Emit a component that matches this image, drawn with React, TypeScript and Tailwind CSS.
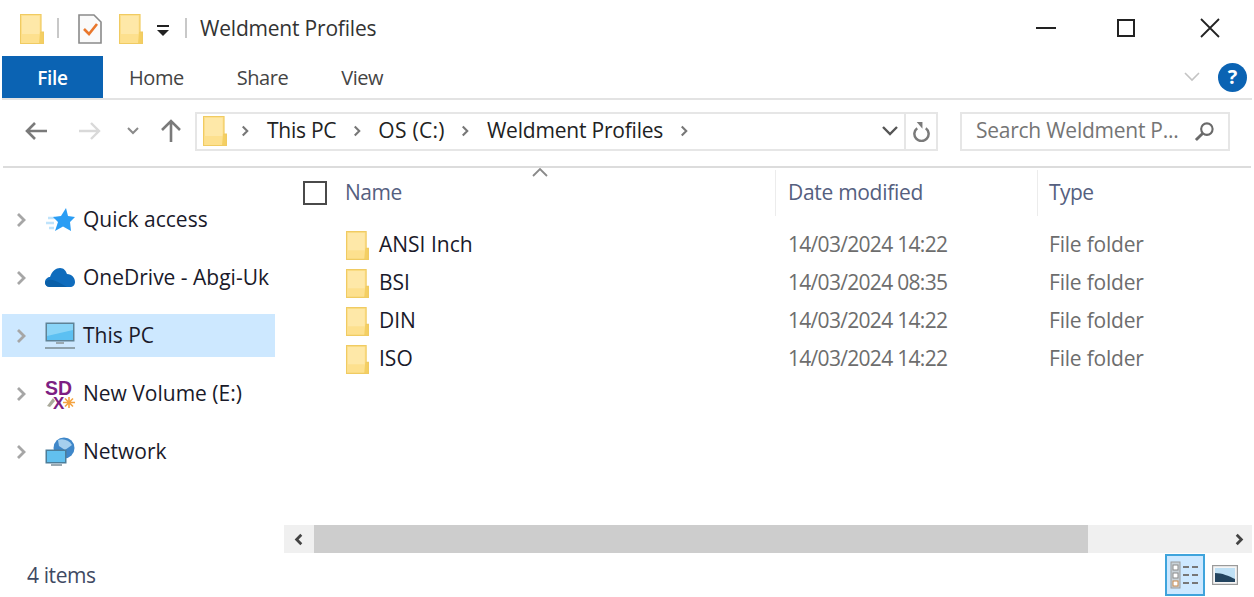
import React from "react";

const font = { fontFamily: '"Open Sans","Noto Sans",sans-serif' };

function Folder({ className = "" }: { className?: string }) {
  return (
    <svg viewBox="0 0 24 30" className={className}>
      <path d="M0.5 0.5H21V18H23.5V29.5H0.5Z" fill="#fde08e" />
      <path d="M2 2H19.5V20H2Z" fill="#fee8a8" />
      <path d="M20 18H23.5V29.5H19Z" fill="#f4cf63" />
      <path d="M0.5 0.5H21V18H23.5V29.5H0.5Z" fill="none" stroke="#f0cb62" strokeWidth="1.2" />
    </svg>
  );
}

function Chevron({ className = "" }: { className?: string }) {
  return (
    <svg viewBox="0 0 10 16" className={className}>
      <path d="M2 2L8 8L2 14" fill="none" stroke="currentColor" strokeWidth="2.8" />
    </svg>
  );
}

function Star() {
  return (
    <svg viewBox="0 0 30 26" className="w-[30px] h-[26px]">
      <path d="M3 11H10M1 16H9M4 21H9" stroke="#bfe3fb" strokeWidth="2.4" />
      <path d="M21 1L23 9L30 10L25 15L26 24L18 19.5L10 24L13 15L8 10L16 9Z" fill="#2a9df4" />
    </svg>
  );
}

function Cloud() {
  return (
    <svg viewBox="0 0 30 20" className="w-[30px] h-[20px]">
      <path d="M5 19C1 19 0 16 0 14C0 11 3 9 5 9C7 3 11 0 15 0C19 0 21 3 22 6C27 6 30 10 30 14C30 17 28 19 25 19Z" fill="#0f6cbd" />
      <path d="M5 19C1 19 0 16 0 14C4 10 9 12 13 14L22 19Z" fill="#0a5fa8" />
    </svg>
  );
}

function Monitor() {
  return (
    <svg viewBox="0 0 30 28" className="w-[30px] h-[28px]">
      <rect x="0.5" y="0.5" width="29" height="19" fill="#5f8296" />
      <rect x="2" y="2" width="26" height="16" fill="#5cc0f2" />
      <path d="M2 2H28V8L2 14Z" fill="#8ad4f7" />
      <rect x="11" y="20" width="8" height="2" fill="#9aa9b2" />
      <rect x="0" y="25" width="30" height="2" fill="#8fa2ad" />
    </svg>
  );
}

function SdIcon() {
  return (
    <svg viewBox="0 0 30 32" className="w-[30px] h-[32px] overflow-visible">
      <text x="0" y="17" fontSize="20" fontWeight="700" fontFamily="Liberation Sans Narrow, Liberation Sans" textLength="27" lengthAdjust="spacingAndGlyphs" fill="#7d1f83">SD</text>
      <text x="8" y="31" fontSize="17" fontWeight="700" fontFamily="Liberation Sans" fill="#7d1f83">X</text>
      <path d="M2 28L8 20L10 23L5 29Z" fill="#a9a99a" />
      <path d="M24 19V30M18 24.5H30M20 20.5L28 28.5M28 20.5L20 28.5" stroke="#f4a340" strokeWidth="1.6" />
    </svg>
  );
}

function Net() {
  return (
    <svg viewBox="0 0 30 30" className="w-[30px] h-[30px]">
      <circle cx="19" cy="11" r="10.5" fill="#3f87c9" />
      <path d="M13 3C18 1 24 3 27 8L20 13L14 9Z" fill="#a6cfee" />
      <rect x="0.5" y="12.5" width="21" height="14" fill="#4c7d99" />
      <rect x="2" y="14" width="18" height="11" fill="#62c0ee" />
      <rect x="6" y="27" width="11" height="2" fill="#9aa9b2" />
    </svg>
  );
}

function NavItem({ icon, label, active }: { icon: React.ReactNode; label: string; active?: boolean }) {
  return (
    <div className={`h-[43px] ml-[2px] w-[273px] flex items-center ${active ? "bg-[#cde8ff]" : ""}`}>
      <Chevron className="ml-[14px] w-[10px] h-[16px] text-[#a6a6a6]" />
      <div className="ml-[18px] w-[32px] flex items-center justify-center shrink-0">{icon}</div>
      <span className="ml-[7px] text-[21px] tracking-[0px] text-[#1a1a2a] whitespace-nowrap">{label}</span>
    </div>
  );
}

function FileRow({ name, date }: { name: string; date: string }) {
  return (
    <div className="h-[38px] flex items-center">
      <Folder className="ml-[62px] w-[23px] h-[29px] shrink-0" />
      <span className="ml-[10px] w-[409px] text-[21px] tracking-[0px] text-[#1a1a2a]">{name}</span>
      <span className="w-[261px] text-[21px] tracking-[-0.7px] text-[#6d6d6d]">{date}</span>
      <span className="text-[21px] tracking-[-0.2px] text-[#6d6d6d]">File folder</span>
    </div>
  );
}

export default function App() {
  return (
    <div style={font} className="w-[1254px] h-[597px] bg-white flex flex-col overflow-hidden">
      {/* title bar */}
      <div className="h-[56px] flex items-center shrink-0">
        <Folder className="ml-[20px] w-[24px] h-[30px] mt-[1px]" />
        <div className="ml-[13px] w-[2px] h-[20px] bg-[#c8c8c8]" />
        <svg viewBox="0 0 24 30" className="ml-[19px] w-[24px] h-[30px] mt-[2px]">
          <path d="M1 1H16L23 8V29H1Z" fill="#fafafa" stroke="#8a8a8a" strokeWidth="1.6" />
          <path d="M6 15L11 20L19 10" fill="none" stroke="#e9772c" strokeWidth="2.6" />
        </svg>
        <Folder className="ml-[17px] w-[24px] h-[30px] mt-[2px]" />
        <svg viewBox="0 0 14 12" className="ml-[13px] w-[14px] h-[12px] mt-[6px]">
          <rect x="1" y="0" width="12" height="2" fill="#222" />
          <path d="M1 5H13L7 11Z" fill="#222" />
        </svg>
        <div className="ml-[15px] w-[2px] h-[20px] bg-[#c8c8c8]" />
        <span className="ml-[13px] mt-[2px] text-[21px] tracking-[-0.2px] text-[#333]">Weldment Profiles</span>
        <div className="ml-auto flex items-center mr-[34px]">
          <div className="w-[20px] h-[2px] bg-[#222]" />
          <div className="ml-[61px] w-[18px] h-[18px] border-2 border-[#222]" />
          <svg viewBox="0 0 20 20" className="ml-[65px] w-[20px] h-[20px]">
            <path d="M1 1L19 19M19 1L1 19" stroke="#222" strokeWidth="1.8" />
          </svg>
        </div>
      </div>

      {/* ribbon tabs */}
      <div className="h-[44px] shrink-0 flex items-center border-b-2 border-[#e3e3e3] mx-[2px]">
        <div className="w-[101px] h-[42px] pt-[2px] bg-[#0b63b3] text-white flex items-center justify-center text-[19px] font-semibold tracking-[-0.3px]">File</div>
        <div className="flex items-center pt-[2px] text-[20px] text-[#444] tracking-[-0.45px]">
          <span className="ml-[26px]">Home</span>
          <span className="ml-[53px]">Share</span>
          <span className="ml-[53px]">View</span>
        </div>
        <svg viewBox="0 0 16 10" className="ml-auto w-[16px] h-[10px]">
          <path d="M1 1L8 8L15 1" fill="none" stroke="#c4c4c4" strokeWidth="1.6" />
        </svg>
        <div className="ml-[18px] mr-[5px] w-[29px] h-[29px] rounded-full bg-[#0b63b3] text-white flex items-center justify-center text-[20px] font-bold">?</div>
      </div>

      {/* address bar */}
      <div className="h-[68px] shrink-0 flex items-center border-b-2 border-[#dcdcdc] mx-[3px] pb-[4px]">
        <svg viewBox="0 0 24 20" className="ml-[21px] w-[24px] h-[20px]">
          <path d="M23 10H3M11 2L3 10L11 18" fill="none" stroke="#7a7a7a" strokeWidth="2.6" />
        </svg>
        <svg viewBox="0 0 24 20" className="ml-[30px] w-[24px] h-[20px]">
          <path d="M1 10H21M13 2L21 10L13 18" fill="none" stroke="#d9d9d9" strokeWidth="2.4" />
        </svg>
        <svg viewBox="0 0 12 8" className="ml-[25px] w-[12px] h-[8px]">
          <path d="M1 1L6 6L11 1" fill="none" stroke="#8a8a8a" strokeWidth="2" />
        </svg>
        <svg viewBox="0 0 22 24" className="ml-[21px] w-[22px] h-[24px]">
          <path d="M11 23V3M2 11L11 2L20 11" fill="none" stroke="#7a7a7a" strokeWidth="2.6" />
        </svg>
        <div className="ml-[13px] w-[743px] h-[39px] border-2 border-[#e6e6e6] flex items-center">
          <Folder className="ml-[6px] w-[24px] h-[30px] shrink-0" />
          <Chevron className="ml-[14px] w-[8px] h-[12px] text-[#777]" />
          <span className="ml-[18px] text-[21px] tracking-[-0.25px] text-[#222]">This PC</span>
          <Chevron className="ml-[17px] w-[8px] h-[12px] text-[#777]" />
          <span className="ml-[17px] text-[21px] tracking-[0.3px] text-[#222]">OS (C:)</span>
          <Chevron className="ml-[16px] w-[8px] h-[12px] text-[#777]" />
          <span className="ml-[18px] text-[21px] tracking-[-0.2px] text-[#222]">Weldment Profiles</span>
          <Chevron className="ml-[17px] w-[8px] h-[12px] text-[#777]" />
          <svg viewBox="0 0 16 10" className="ml-auto mr-[4px] w-[16px] h-[10px]">
            <path d="M1 1L8 8L15 1" fill="none" stroke="#555" strokeWidth="2.4" />
          </svg>
          <div className="ml-[2px] w-[2px] h-full bg-[#e6e6e6]" />
          <svg viewBox="0 0 20 22" className="ml-[6px] mr-[5px] w-[19px] h-[21px]">
            <path d="M14.5 7.5A7.5 7.5 0 1 1 5.5 7.5" fill="none" stroke="#7a7a7a" strokeWidth="2.6" />
            <path d="M5 1H11V8Z" fill="#7a7a7a" />
          </svg>
        </div>
        <div className="ml-[22px] w-[270px] h-[39px] border-2 border-[#e6e6e6] flex items-center">
          <span className="ml-[14px] text-[21px] tracking-[-0.25px] text-[#757575] whitespace-nowrap">Search Weldment P...</span>
          <svg viewBox="0 0 22 22" className="ml-auto mr-[13px] w-[21px] h-[21px]">
            <circle cx="13.5" cy="8.5" r="6" fill="none" stroke="#6a6a6a" strokeWidth="2.2" />
            <path d="M9 13L2 20" stroke="#6a6a6a" strokeWidth="3" />
          </svg>
        </div>
      </div>

      {/* main */}
      <div className="h-[385px] shrink-0 flex">
        <div className="w-[284px] shrink-0 pt-[30px] flex flex-col gap-[15px]">
          <NavItem icon={<Star />} label="Quick access" />
          <NavItem icon={<Cloud />} label="OneDrive - Abgi-Uk" />
          <NavItem icon={<Monitor />} label="This PC" active />
          <NavItem icon={<SdIcon />} label="New Volume (E:)" />
          <NavItem icon={<Net />} label="Network" />
        </div>
        <div className="flex-1 flex flex-col min-w-0">
          <div className="relative h-[50px] flex items-center shrink-0">
            <svg viewBox="0 0 16 9" className="absolute left-[248px] top-[0px] w-[16px] h-[9px]">
              <path d="M1 8L8 1L15 8" fill="none" stroke="#8a8a8a" strokeWidth="1.8" />
            </svg>
            <div className="ml-[19px] w-[24px] h-[24px] border-2 border-[#4a4a4a] shrink-0" />
            <span className="ml-[18px] w-[430px] text-[21px] tracking-[-0.5px] text-[#55607f]">Name</span>
            <div className="w-[1px] h-[46px] bg-[#ececec]" />
            <span className="ml-[12px] w-[249px] text-[21px] tracking-[-0.3px] text-[#55607f]">Date modified</span>
            <div className="w-[1px] h-[46px] bg-[#ececec]" />
            <span className="ml-[11px] text-[21px] tracking-[-0.6px] text-[#55607f]">Type</span>
          </div>
          <div className="flex-1 pt-[8px]">
            <FileRow name="ANSI Inch" date="14/03/2024 14:22" />
            <FileRow name="BSI" date="14/03/2024 08:35" />
            <FileRow name="DIN" date="14/03/2024 14:22" />
            <FileRow name="ISO" date="14/03/2024 14:22" />
          </div>
          <div className="h-[28px] shrink-0 bg-[#f0f0f0] flex items-center mr-[2px]">
            <svg viewBox="0 0 10 14" className="ml-[9px] w-[11px] h-[13px]">
              <path d="M8 2L3 7L8 12" fill="none" stroke="#444" strokeWidth="3" />
            </svg>
            <div className="ml-[10px] w-[774px] h-full bg-[#cdcdcd]" />
            <svg viewBox="0 0 10 14" className="ml-auto mr-[7px] w-[11px] h-[13px]">
              <path d="M2 2L7 7L2 12" fill="none" stroke="#444" strokeWidth="3" />
            </svg>
          </div>
        </div>
      </div>

      {/* status bar */}
      <div className="flex-1 flex items-center">
        <span className="ml-[27px] pt-[1px] text-[21px] tracking-[-0.4px] text-[#3f4a63]">4 items</span>
        <div className="ml-auto w-[40px] h-[42px] bg-[#cde8ff] border-2 border-[#3fa4dc] flex items-center justify-center">
          <svg viewBox="0 0 30 30" className="w-[30px] h-[30px]">
            <rect x="1" y="2" width="9" height="26" fill="#c9d2d8" stroke="#9a9a9a" />
            <rect x="3" y="5" width="5" height="5" fill="#fff" stroke="#8a8a8a" />
            <rect x="3" y="13" width="5" height="5" fill="#fff" stroke="#8a8a8a" />
            <rect x="3" y="21" width="5" height="5" fill="#fff" stroke="#c8884a" />
            <path d="M13 7H19M22 7H28M13 15H19M22 15H28M13 23H19M22 23H28" stroke="#777" strokeWidth="2" />
          </svg>
        </div>
        <svg viewBox="0 0 26 20" className="ml-[7px] mr-[16px] w-[26px] h-[20px]">
          <rect x="0.5" y="0.5" width="25" height="19" fill="#f5f5f5" stroke="#9a9a9a" strokeWidth="1.4" />
          <rect x="3" y="3" width="20" height="14" fill="#bfe0f5" />
          <path d="M3 8C10 8 17 11 23 14V17H3Z" fill="#23445f" />
        </svg>
      </div>
    </div>
  );
}
